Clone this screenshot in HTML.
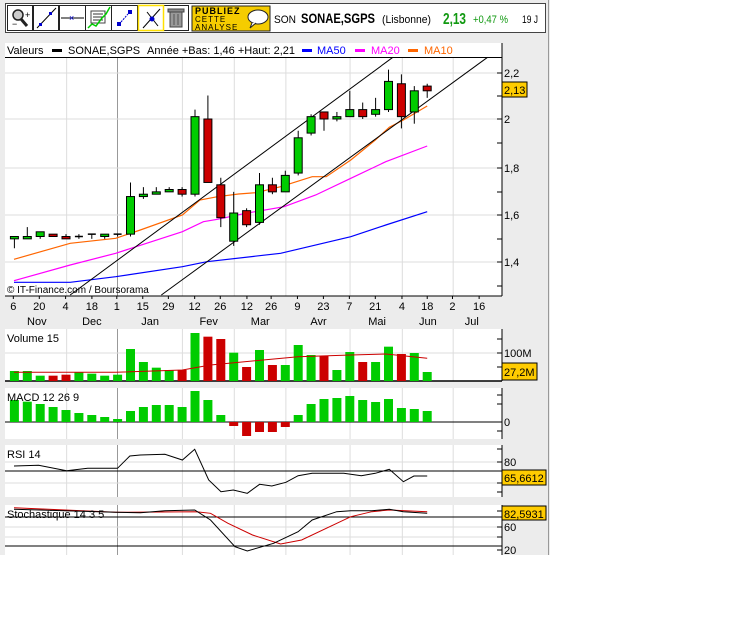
<!DOCTYPE html>
<html><head><meta charset="utf-8"><style>
html,body{margin:0;padding:0;background:#fff;width:738px;height:637px;overflow:hidden}
svg text{font-family:"Liberation Sans",sans-serif}
</style></head><body>
<svg id="s" width="738" height="637" xmlns="http://www.w3.org/2000/svg">
<rect x="0" y="0" width="550" height="555" fill="#ececec"/>
<line x1="548.5" y1="0" x2="548.5" y2="555" stroke="#999"/>
<rect x="5.5" y="3.5" width="540" height="29" fill="#fff" stroke="#444"/>
<g stroke="#222" fill="#fff">
<rect x="7.5" y="5.5" width="25" height="25"/><rect x="33.5" y="5.5" width="25" height="25"/>
<rect x="59.5" y="5.5" width="26" height="25"/><rect x="85.5" y="5.5" width="26" height="25"/>
<rect x="111.5" y="5.5" width="26" height="25"/><rect x="163.5" y="5.5" width="25" height="25"/>
</g>
<rect x="138.5" y="5.5" width="25" height="25" fill="#fff" stroke="#ffe000" stroke-width="1.5"/>
<circle cx="18" cy="15" r="5" fill="#ccc" stroke="#222" stroke-width="1.5"/><line x1="21" y1="19" x2="27" y2="26" stroke="#222" stroke-width="3"/>
<text x="25" y="18" font-size="9">+</text><text x="12" y="27" font-size="9">−</text>
<line x1="37" y1="28" x2="56" y2="8" stroke="#000"/><rect x="39" y="23" width="3" height="3" fill="#00c"/><rect x="49" y="12" width="3" height="3" fill="#00c"/>
<line x1="61" y1="18" x2="84" y2="18" stroke="#000"/><text x="69" y="21" font-size="9" fill="#00c">×</text>
<rect x="91" y="11" width="14" height="12" fill="none" stroke="#444"/><line x1="93" y1="14" x2="103" y2="14" stroke="#333"/><line x1="93" y1="17" x2="103" y2="17" stroke="#333"/><line x1="93" y1="20" x2="103" y2="20" stroke="#333"/>
<polyline points="88,28 92,24 96,26 102,18 106,14 110,7" fill="none" stroke="#0c0" stroke-width="1.5"/>
<rect x="117" y="22" width="4" height="4" fill="#00c"/><rect x="128" y="10" width="4" height="4" fill="#00c"/><line x1="121" y1="22" x2="128" y2="14" stroke="#00c" stroke-dasharray="2,1"/>
<line x1="143" y1="28" x2="160" y2="9" stroke="#000"/><line x1="147" y1="12" x2="158" y2="26" stroke="#000"/><circle cx="152" cy="19" r="2.5" fill="#00c"/>
<rect x="170" y="12" width="12" height="15" fill="#999" stroke="#444"/><rect x="168" y="9" width="16" height="3" fill="#888" stroke="#444"/><line x1="174" y1="14" x2="174" y2="25" stroke="#555"/><line x1="178" y1="14" x2="178" y2="25" stroke="#555"/>
<rect x="192" y="6" width="78" height="25" fill="#f5cc00" stroke="#222"/>
<text x="195" y="14" font-size="9" font-weight="bold" letter-spacing="1">PUBLIEZ</text>
<text x="195" y="22" font-size="8" letter-spacing="1">CETTE</text>
<text x="195" y="30" font-size="8" letter-spacing="1">ANALYSE</text>
<ellipse cx="258" cy="17" rx="10" ry="7" fill="#fff" stroke="#222"/><path d="M252 23 L250 28 L256 23" fill="#fff" stroke="#222"/>
<text x="274" y="23" font-size="11" textLength="22" lengthAdjust="spacingAndGlyphs">SON</text>
<text x="301" y="23" font-size="14" font-weight="bold" textLength="74" lengthAdjust="spacingAndGlyphs">SONAE,SGPS</text>
<text x="382" y="23" font-size="11" textLength="49" lengthAdjust="spacingAndGlyphs">(Lisbonne)</text>
<text x="443" y="24" font-size="16" font-weight="bold" fill="#119911" textLength="23" lengthAdjust="spacingAndGlyphs">2,13</text>
<text x="473" y="23" font-size="11" fill="#119911" textLength="35" lengthAdjust="spacingAndGlyphs">+0,47 %</text>
<text x="522" y="23" font-size="11" textLength="16" lengthAdjust="spacingAndGlyphs">19 J</text>
<g id="g"></g>
</svg>
<script>
var S=2.851,o='';
function X(z){return z/S}
function Y1(z){return 40+z/3}
function Y2(z){return 320+z/3}
function ln(a,b,c,d,col,w){o+='<line x1="'+a+'" y1="'+b+'" x2="'+c+'" y2="'+d+'" stroke="'+col+'" stroke-width="'+(w||1)+'"/>'}
function rc(x,y,w,h,f,s){o+='<rect x="'+x+'" y="'+y+'" width="'+w+'" height="'+h+'" fill="'+f+'"'+(s?' stroke="'+s+'"':'')+'/>'}
function tx(x,y,t,sz,col,anc){o+='<text x="'+x+'" y="'+y+'" font-size="'+(sz||11)+'" fill="'+(col||'#000')+'"'+(anc?' text-anchor="'+anc+'"':'')+'>'+t+'</text>'}
function pl(pts,Yf,col,w){o+='<polyline fill="none" stroke="'+col+'" stroke-width="'+(w||1)+'" points="'+pts.map(function(p){return X(p[0]).toFixed(1)+','+Yf(p[1]).toFixed(1)}).join(' ')+'"/>'}
var grid=[190,520,668,815,998,1147,1292];
rc(5,43,497,253,'#fff');
ln(5,57.5,502,57.5,'#000');
function vgrid(y1,y2){grid.forEach(function(g){ln(X(g),y1,X(g),y2,'#ddd')});ln(X(335),y1,X(335),y2,'#999')}
vgrid(58,296);
[73,119,168,215,262].forEach(function(y){ln(5,y,502,y,'#ddd')});
ln(502,43,502,296,'#000');ln(5,296,502,296,'#000');
[[73,'2,2'],[119,'2'],[168,'1,8'],[215,'1,6'],[262,'1,4']].forEach(function(a){ln(497,a[0],502,a[0],'#000');tx(504,a[0]+4,a[1],11)});
[96,143,192,239,286].forEach(function(y){ln(497,y,502,y,'#000')});
tx(7,54,'Valeurs',11);rc(52,49,10,3,'#000');tx(68,54,'SONAE,SGPS',11);tx(147,54,'Année +Bas: 1,46 +Haut: 2,21',11);
rc(302,49,10,3,'#00f');tx(317,54,'MA50',11,'#00f');rc(355,49,10,3,'#f0f');tx(371,54,'MA20',11,'#f0f');rc(408,49,10,3,'#f60');tx(424,54,'MA10',11,'#f60');
pl([[40,727],[200,727],[330,710],[520,680],[590,665],[800,640],[1000,590],[1100,555],[1218,515]],Y1,'#00f',1.2);
pl([[40,722],[200,675],[330,640],[520,575],[580,545],[620,538],[700,520],[810,500],[900,465],[1000,415],[1100,365],[1218,318]],Y1,'#f0f',1.2);
pl([[40,658],[200,610],[330,595],[400,570],[520,525],[570,480],[620,470],[680,462],[730,458],[800,440],[890,410],[930,410],[1000,360],[1070,300],[1110,262],[1150,240],[1218,198]],Y1,'#f60',1.2);
ln(X(200),Y1(765),X(1120),Y1(52),'#000');ln(X(460),Y1(765),X(1390),Y1(52),'#000');
function py(p){return 119-(p-2)*235}
var C=[[1.49,1.50,1.45,1.50],[1.49,1.50,1.49,1.54],[1.50,1.52,1.49,1.52],[1.51,1.50,1.50,1.51],[1.50,1.49,1.49,1.51],[1.50,1.50,1.49,1.51],[1.51,1.51,1.49,1.51],[1.50,1.51,1.49,1.51],[1.51,1.51,1.50,1.51],
[1.51,1.67,1.50,1.73],[1.67,1.68,1.66,1.71],[1.68,1.69,1.68,1.71],[1.69,1.70,1.69,1.71],[1.70,1.68,1.67,1.71],[1.68,2.01,1.67,2.04],[2.00,1.73,1.73,2.10],[1.72,1.58,1.54,1.75],[1.48,1.60,1.46,1.69],[1.61,1.55,1.54,1.62],[1.56,1.72,1.55,1.77],[1.72,1.69,1.68,1.75],[1.69,1.76,1.69,1.78],
[1.77,1.92,1.76,1.95],[1.94,2.01,1.93,2.02],[2.03,2.00,1.95,2.03],[2.00,2.01,1.99,2.03],[2.01,2.04,2.01,2.12],[2.04,2.01,2.00,2.07],[2.02,2.04,2.01,2.09],[2.04,2.16,2.03,2.21],[2.15,2.01,1.96,2.19],[2.03,2.12,1.98,2.14],[2.14,2.12,2.09,2.15]];
C.forEach(function(c,i){var x=14.4+i*12.9;ln(x,py(c[3]),x,py(c[2]),'#000');var t=py(Math.max(c[0],c[1])),b=py(Math.min(c[0],c[1]));
 if(b-t<1.5){ln(x-4,t,x+4,t,'#000',1.5);if(c[0]==c[1])return;}
 rc(x-4,t,8,Math.max(b-t,2),c[1]>=c[0]?'#00cc00':'#cc0000','#000')});
rc(502,82,25,15,'#ffcc00','#000');tx(504,94,'2,13',11);
tx(7,293,'© IT-Finance.com / Boursorama',10);
var dl=[[38,'6'],[112,'20'],[187,'4'],[262,'18'],[333,'1'],[407,'15'],[480,'29'],[555,'12'],[628,'26'],[704,'12'],[773,'26'],[848,'9'],[922,'23'],[996,'7'],[1070,'21'],[1146,'4'],[1218,'18'],[1290,'2'],[1366,'16']];
dl.forEach(function(d){ln(X(d[0]),296,X(d[0]),299,'#000');tx(X(d[0]),310,d[1],11,'#000','middle')});
[[105,'Nov'],[262,'Dec'],[428,'Jan'],[595,'Fev'],[742,'Mar'],[908,'Avr'],[1075,'Mai'],[1220,'Jun'],[1345,'Jul']].forEach(function(d){tx(X(d[0]),325,d[1],11,'#000','middle')});
function panel(y1,y2){rc(5,y1,497,y2-y1,'#fff');vgrid(y1,y2);ln(502,y1,502,y2,'#000')}
panel(329,381);ln(5,353,502,353,'#ddd');ln(5,381,502,381,'#000',1.5);
var vt=[153,153,167,167,164,157,161,167,164,87,126,143,150,150,39,50,57,98,141,90,135,135,75,105,108,150,96,126,126,80,102,99,156];
var vc='gggrrggggggggrgrrgrgrgggrggrggrgg';
vt.forEach(function(t,i){var x=14.4+i*12.9;rc(x-4.5,Y2(t),9,381-Y2(t),vc[i]=='g'?'#00cc00':'#cc0000')});
pl([[40,157],[330,157],[520,150],[600,135],[750,120],[850,110],[1000,105],[1100,102],[1218,115]],Y2,'#cc0000',1);
tx(7,342,'Volume 15',11);[339,353,367].forEach(function(y){ln(497,y,502,y,'#000')});tx(504,357,'100M',11);
rc(502,363,35,17,'#ffcc00','#000');tx(504,376,'27,2M',11);
panel(388,439);ln(5,422,502,422,'#000');
var mt=[240,245,252,261,270,279,285,291,297,273,261,255,255,261,213,240,285,318,348,336,336,321,285,252,237,234,228,240,246,237,264,267,273];
mt.forEach(function(t,i){var x=14.4+i*12.9,y=Y2(t),neg=i>=17&&i<=21;if(neg)rc(x-4.5,422,9,y-422,'#cc0000');else rc(x-4.5,y,9,422-y,'#00cc00')});
tx(7,401,'MACD 12 26 9',11);[395,404,431].forEach(function(y){ln(497,y,502,y,'#000')});tx(504,426,'0',11);
panel(445,497);ln(5,462,502,462,'#ddd');ln(5,483,502,483,'#ddd');ln(5,471,502,471,'#000');
pl([[40,438],[110,436],[190,452],[250,445],[335,445],[370,408],[400,405],[470,403],[520,420],[555,388],[595,480],[630,515],[665,510],[705,520],[740,493],[775,498],[815,487],[850,467],[890,460],[980,460],[1030,467],[1070,460],[1110,448],[1150,485],[1180,468],[1218,468]],Y2,'#000',1);
tx(7,458,'RSI 14',11);[449,462,483,492].forEach(function(y){ln(497,y,502,y,'#000')});tx(504,466,'80',11);
rc(502,470,44,15,'#ffcc00','#000');tx(504,482,'65,6612',11);
panel(505,555);ln(5,527,502,527,'#ddd');ln(5,537,502,537,'#ddd');ln(5,517,502,517,'#000');ln(5,546,502,546,'#000');
pl([[40,563],[330,577],[560,575],[600,580],[650,610],[720,645],[800,672],[860,660],[1000,590],[1060,575],[1110,570],[1218,575]],Y2,'#cc0000',1);
pl([[40,568],[330,577],[400,578],[470,572],[555,570],[600,600],[670,680],[705,693],[780,670],[850,635],[890,600],[960,575],[1000,572],[1060,572],[1110,568],[1150,575],[1218,580]],Y2,'#000',1);
tx(7,518,'Stochastique 14 3 5',11);[511,527,537,550].forEach(function(y){ln(497,y,502,y,'#000')});tx(504,531,'60',11);tx(504,554,'20',11);
rc(502,506,44,14,'#ffcc00','#000');tx(504,518,'82,5931',11);
document.getElementById('g').innerHTML=o;
</script>
</body></html>
